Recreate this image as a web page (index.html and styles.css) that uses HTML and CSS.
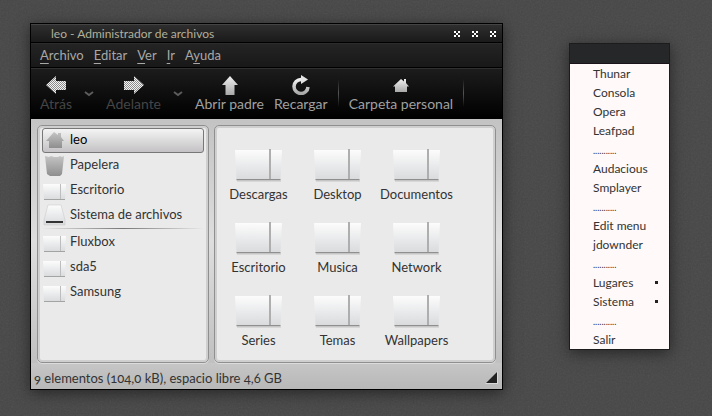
FILE: index.html
```html
<!DOCTYPE html>
<html lang="es">
<head>
  <meta charset="UTF-8" />
  <title>leo - Administrador de archivos</title>
  <link rel="stylesheet" href="styles.css">
</head>
<body>
  <svg class="grain" aria-hidden="true">
    <filter id="noise">
      <feTurbulence type="fractalNoise" baseFrequency="0.6" numOctaves="3" />
      <feColorMatrix type="saturate" values="0" />
    </filter>
    <rect width="100%" height="100%" filter="url(#noise)" />
  </svg>

  <!-- shared shapes -->
  <svg class="defs" aria-hidden="true">
    <defs>
      <linearGradient id="silver" x1="0" y1="0" x2="0" y2="1">
        <stop offset="0" stop-color="#f0f0f0" />
        <stop offset="1" stop-color="#a8a8a8" />
      </linearGradient>
      <linearGradient id="grey" x1="0" y1="0" x2="0" y2="1">
        <stop offset="0" stop-color="#c4c4c4" />
        <stop offset="1" stop-color="#8e8e8e" />
      </linearGradient>
      <linearGradient id="paper" x1="0" y1="0" x2="0" y2="1">
        <stop offset="0" stop-color="#fcfcfc" />
        <stop offset="1" stop-color="#d8dadc" />
      </linearGradient>
      <pattern id="check" width="2" height="2" patternUnits="userSpaceOnUse">
        <rect width="2" height="2" fill="#8c8c8c" />
        <rect width="1" height="1" fill="#f4f4f4" />
        <rect x="1" y="1" width="1" height="1" fill="#f4f4f4" />
      </pattern>
    </defs>
    <symbol id="folder" viewBox="0 0 48 34">
      <path d="M2 31h44v2H2z" fill="#000" opacity=".08" />
      <path d="M0 1h34.500V31H1.500z" fill="url(#paper)" />
      <path d="M36 1h11L45.500 31H36z" fill="url(#paper)" />
      <path d="M34 0h2v31h-2z" fill="#aeaeae" />
      <path d="M1.500 30h44v1.200h-44z" fill="#8f8f8f" />
    </symbol>
    <symbol id="folder-small" viewBox="0 0 24 23">
      <path d="M0 5h17v16H1z" fill="url(#paper)" />
      <path d="M18 5h5l-1 16h-4z" fill="url(#paper)" />
      <path d="M17 5h1v16h-1z" fill="#bdbdbd" />
      <path d="M1 20h21v1H1z" fill="#a2a4a4" />
    </symbol>
    <symbol id="x-mark" viewBox="0 0 6 6">
      <path d="M0 0h2v2H0zM4 0h2v2H4zM2 2h2v2H2zM0 4h2v2H0zM4 4h2v2H4z" fill="#fff" />
    </symbol>
  </svg>

  <main class="desktop">
    <section class="window">
      <header class="titlebar">
        <h1>leo - Administrador de archivos</h1>
        <div class="window-buttons">
          <button aria-label="Minimizar"><svg viewBox="0 0 6 6"><use href="#x-mark" /></svg></button>
          <button aria-label="Maximizar"><svg viewBox="0 0 6 6"><use href="#x-mark" /></svg></button>
          <button aria-label="Cerrar"><svg viewBox="0 0 6 6"><use href="#x-mark" /></svg></button>
        </div>
      </header>

      <nav class="menubar">
        <button><u>A</u>rchivo</button>
        <button><u>E</u>ditar</button>
        <button><u>V</u>er</button>
        <button><u>I</u>r</button>
        <button>A<u>y</u>uda</button>
      </nav>

      <div class="toolbar">
        <button class="tool" disabled>
          <svg viewBox="0 0 20 20"><path d="M0 10L10 1v5h10v9H10v4z" fill="url(#check)" /></svg>
          Atrás
        </button>
        <button class="drop" aria-label="Historial atrás"><svg viewBox="0 0 10 6"><path d="M1 1l4 3 4-3" /></svg></button>
        <button class="tool" disabled>
          <svg viewBox="0 0 20 20"><path d="M20 10L10 1v5H0v9h10v4z" fill="url(#check)" /></svg>
          Adelante
        </button>
        <button class="drop" aria-label="Historial adelante"><svg viewBox="0 0 10 6"><path d="M1 1l4 3 4-3" /></svg></button>
        <button class="tool">
          <svg viewBox="0 0 20 20"><path d="M10 1l8 9h-3.500v10h-9V10H2z" fill="url(#silver)" /></svg>
          Abrir padre
        </button>
        <button class="tool">
          <svg viewBox="0 0 20 20"><path d="M12 4.500H10A7 7 0 1 0 17 12" fill="none" stroke="url(#silver)" stroke-width="3.500" /><path d="M10 0l7 4.500L10 9z" fill="#e4e4e4" /></svg>
          Recargar
        </button>
        <span class="divider"></span>
        <button class="tool">
          <svg viewBox="0 0 20 20"><path d="M10 4l3 2.500V4h2v4l3 3.500h-2V17H4v-5.500H2z" fill="url(#silver)" /></svg>
          Carpeta personal
        </button>
        <span class="divider"></span>
      </div>

      <div class="panes">
        <aside class="pane places">
          <ul>
            <li><a class="selected" href="#leo"><svg viewBox="0 0 24 23"><path d="M11 3l4 3V4h3v4l3 4h-2v7H6v-7H3z" fill="url(#grey)" /></svg>leo</a></li>
            <li><a href="#papelera"><svg viewBox="0 0 24 23"><path d="M2 2l4 1 2-1 3 1h4l2-1 2 1 2-1-2 18-2 2H7l-3-2z" fill="url(#grey)" /></svg>Papelera</a></li>
            <li><a href="#escritorio"><svg viewBox="0 0 24 23"><use href="#folder-small" /></svg>Escritorio</a></li>
            <li><a href="#sistema"><svg viewBox="0 0 24 23"><path d="M5 1h13l4 15v5H1v-5z" fill="url(#paper)" stroke="#c4c4c4" stroke-width=".5" /><path d="M3 17h17v2H3z" fill="#333" /></svg>Sistema de archivos</a></li>
          </ul>
          <hr>
          <ul>
            <li><a href="#fluxbox"><svg viewBox="0 0 24 23"><use href="#folder-small" /></svg>Fluxbox</a></li>
            <li><a href="#sda5"><svg viewBox="0 0 24 23"><use href="#folder-small" /></svg>sda5</a></li>
            <li><a href="#samsung"><svg viewBox="0 0 24 23"><use href="#folder-small" /></svg>Samsung</a></li>
          </ul>
        </aside>

        <div class="pane files">
          <a href="#descargas"><svg viewBox="0 0 48 34"><use href="#folder" /></svg>Descargas</a>
          <a href="#desktop"><svg viewBox="0 0 48 34"><use href="#folder" /></svg>Desktop</a>
          <a href="#documentos"><svg viewBox="0 0 48 34"><use href="#folder" /></svg>Documentos</a>
          <a href="#escritorio"><svg viewBox="0 0 48 34"><use href="#folder" /></svg>Escritorio</a>
          <a href="#musica"><svg viewBox="0 0 48 34"><use href="#folder" /></svg>Musica</a>
          <a href="#network"><svg viewBox="0 0 48 34"><use href="#folder" /></svg>Network</a>
          <a href="#series"><svg viewBox="0 0 48 34"><use href="#folder" /></svg>Series</a>
          <a href="#temas"><svg viewBox="0 0 48 34"><use href="#folder" /></svg>Temas</a>
          <a href="#wallpapers"><svg viewBox="0 0 48 34"><use href="#folder" /></svg>Wallpapers</a>
        </div>
      </div>

      <footer class="statusbar">
        <span>9 elementos (104,0 kB), espacio libre 4,6 GB</span>
        <svg class="grip" viewBox="0 0 14 14" aria-hidden="true">
          <path d="M13 0v13H0z" fill="#d8d8d8" />
          <path d="M12 1v11H1z" fill="#222" />
        </svg>
      </footer>
    </section>

    <nav class="root-menu">
      <div class="root-title"></div>
      <button>Thunar</button>
      <button>Consola</button>
      <button>Opera</button>
      <button>Leafpad</button>
      <div class="dots">...........</div>
      <button>Audacious</button>
      <button>Smplayer</button>
      <div class="dots">...........</div>
      <button>Edit menu</button>
      <button>jdownder</button>
      <div class="dots">...........</div>
      <button class="submenu">Lugares</button>
      <button class="submenu">Sistema</button>
      <div class="dots">...........</div>
      <button>Salir</button>
    </nav>
  </main>
</body>
</html>
```

FILE: styles.css
```css
* {
  box-sizing: border-box;
  margin: 0;
  padding: 0;
}

body {
  background: #474747;
  color: #333;
  min-height: 100vh;
  font: 13px/18px Lato, "Open Sans", sans-serif;
}

button {
  background: none;
  border: none;
  color: inherit;
  font: inherit;
}

a {
  color: inherit;
  text-decoration: none;
}

ul {
  list-style: none;
}

.grain {
  position: absolute;
  inset: 0;
  width: 100%;
  height: 100%;
  opacity: 0.08;
}

.defs {
  position: absolute;
  width: 0;
  height: 0;
}

.desktop {
  position: relative;
  display: flex;
  align-items: flex-start;
  gap: 66px;
  padding: 23px 42px 24px 30px;
}

/* File manager window */
.window {
  flex: 1;
  border: 1px solid #000;
  background: #c4c3c4;
  box-shadow: 0 3px 14px rgba(0, 0, 0, 0.5);
}

.titlebar {
  display: flex;
  align-items: center;
  justify-content: space-between;
  height: 19px;
  padding: 0 6px 0 20px;
  background: linear-gradient(#2e2e2e, #1a1a1a);
  border-top: 1px solid #444;
  border-bottom: 1px solid #000;
  color: #b2b09a;
}

.titlebar h1 {
  font-size: 12px;
  font-weight: 400;
}

.window-buttons {
  display: flex;
  gap: 12px;
}

.window-buttons button,
.window-buttons svg {
  display: block;
  width: 6px;
  height: 6px;
}

.menubar {
  display: flex;
  align-items: flex-start;
  gap: 10px;
  height: 25px;
  padding: 2px 9px;
  background: linear-gradient(#242424, #181818);
  border-top: 1px solid #2c2c2c;
  border-bottom: 1px solid #000;
  color: #a8a8a8;
}

.menubar u {
  text-underline-offset: 3px;
}

.toolbar {
  display: flex;
  align-items: flex-start;
  height: 51px;
  padding: 6px 9px 0;
  background: linear-gradient(#1c1c1c, #000);
  border-top: 1px solid #303030;
  border-bottom: 1px solid #000;
  color: #a0a0a0;
  font-size: 14px;
}

.tool {
  display: flex;
  flex-direction: column;
  align-items: center;
  margin-right: 10px;
  white-space: nowrap;
}

.tool:disabled {
  color: #454545;
}

.tool svg {
  width: 20px;
  height: 20px;
}

.drop {
  margin: 16px 12px 0 2px;
}

.drop svg {
  display: block;
  width: 10px;
  height: 6px;
  fill: none;
  stroke: #5c5c5c;
  stroke-width: 2;
}

.divider {
  width: 1px;
  height: 28px;
  margin: 4px 10px 0 0;
  background: linear-gradient(transparent, #555, transparent);
}

.panes {
  display: flex;
  gap: 5px;
  padding: 6px 6px 0;
  background: linear-gradient(#c4c3c4, #dedede 50%, #c0c0c0);
}

.pane {
  border: 1px solid #8f8f8f;
  border-radius: 5px;
  background: #eaeaea;
  box-shadow: inset 0 0 0 2px #cfcfcf, 0 1px 0 #dcdcdc;
}

.places {
  flex: 0 0 172px;
  padding: 2px 4px;
}

.places a {
  display: flex;
  gap: 3px;
  height: 25px;
  border: 1px solid transparent;
  border-radius: 3px;
  line-height: 20px;
}

.places a.selected {
  border-color: #777;
  background: linear-gradient(#f4f4f4, #c4c2c4);
  color: #000;
}

.places svg {
  width: 24px;
  height: 23px;
}

.places hr {
  height: 1px;
  margin-bottom: 1px;
  border: none;
  background: linear-gradient(90deg, transparent, #777, transparent);
}

.files {
  flex: 1;
  display: grid;
  grid-template-columns: repeat(auto-fill, 79px);
  gap: 19px 0;
  align-content: start;
  padding: 23px 4px 0;
  min-height: 238px;
}

.files a {
  display: flex;
  flex-direction: column;
  align-items: center;
  gap: 2px;
}

.files svg {
  width: 48px;
  height: 34px;
}

.statusbar {
  display: flex;
  align-items: center;
  justify-content: space-between;
  height: 26px;
  padding: 4px 3px 0;
  background: linear-gradient(#c6c6c6, #b8b8b8);
  font-variant-numeric: oldstyle-nums;
}

.grip {
  width: 14px;
  height: 14px;
}

/* Desktop menu */
.root-menu {
  flex: 0 0 101px;
  display: flex;
  flex-direction: column;
  margin-top: 20px;
  border: 1px solid #1c1c1c;
  background: #fff9f9;
  box-shadow: 0 3px 14px rgba(0, 0, 0, 0.5);
  font-size: 12px;
  line-height: 19px;
}

.root-title {
  height: 20px;
  background: #262728;
  border-bottom: 1px solid #1c1219;
}

.root-menu button,
.dots {
  height: 19px;
  padding-left: 23px;
  text-align: left;
}

.dots {
  font-size: 9px;
  line-height: 21px;
}

.root-menu .submenu {
  display: flex;
  align-items: center;
  justify-content: space-between;
  padding-right: 11px;
}

.submenu::after {
  content: "";
  width: 3px;
  height: 3px;
  background: #222;
}
```
